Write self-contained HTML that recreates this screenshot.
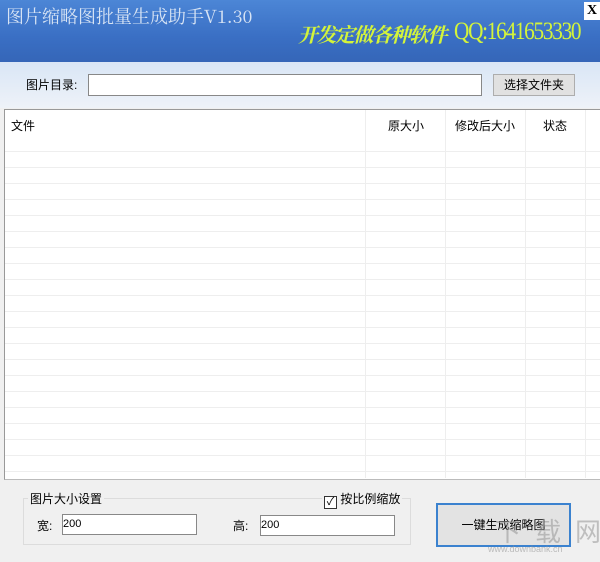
<!DOCTYPE html><html><head><style>
body{margin:0;width:600px;height:562px;overflow:hidden;background:#f0f0f0;font-family:"Liberation Sans","Noto Sans CJK SC",sans-serif;font-size:12px;position:relative}
.a{position:absolute;white-space:nowrap}
.hdr{left:0;top:0;width:600px;height:62px;background:linear-gradient(#4c86d6,#3a6fc4 60%,#3566b8)}
.band{left:0;top:62px;width:600px;height:46px;background:linear-gradient(#d9e6f6,#eef2f8)}
.inp{background:#fff;border:1px solid #888;}
.list{left:4px;top:109px;width:596px;height:369px;background:#fff;border-top:1px solid #999;border-left:1px solid #999;border-bottom:1px solid #bbb;
background-image:repeating-linear-gradient(to bottom,transparent 0 15px,#eee 15px 16px);background-position:0 26px;background-repeat:repeat-y}
.vl{width:1px;background:#eee;top:110px;height:368px}
</style></head><body>
<div class="a hdr"></div>
<div class="a" style="left:6px;top:3px;color:#d8e4f4;font-family:'Noto Serif CJK SC',serif;font-size:18px">图片缩略图批量生成助手V1.30</div>
<div class="a" style="left:298px;top:19px;color:#d4f43a;font-family:'Noto Serif CJK SC',serif;font-size:20px;font-style:italic;font-weight:bold;letter-spacing:-1.5px">开发定做各种软件</div>
<div class="a" style="left:454px;top:18px;color:#d4f43a;font-family:'Liberation Serif',serif;font-size:25px;letter-spacing:-1.5px;transform:scaleX(0.85);transform-origin:left">QQ:1641653330</div>
<div class="a" style="left:584px;top:2px;width:16px;height:18px;background:#fff;font-weight:bold;font-family:'Liberation Serif';font-size:14px;text-align:center;line-height:18px">X</div>
<div class="a band"></div>
<div class="a" style="left:26px;top:76px">图片目录:</div>
<div class="a inp" style="left:88px;top:74px;width:392px;height:20px"></div>
<div class="a" style="left:493px;top:74px;width:82px;height:22px;background:#e1e1e1;border:1px solid #adadad;box-sizing:border-box;text-align:center;line-height:20px">选择文件夹</div>
<div class="a list"></div>
<div class="a" style="left:5px;top:110px;width:595px;height:26px;background:#fff"></div>
<div class="a vl" style="left:365px"></div><div class="a vl" style="left:445px"></div><div class="a vl" style="left:525px"></div><div class="a vl" style="left:585px"></div>
<div class="a" style="left:11px;top:117px">文件</div>
<div class="a" style="left:388px;top:117px">原大小</div>
<div class="a" style="left:455px;top:117px">修改后大小</div>
<div class="a" style="left:543px;top:117px">状态</div>
<div class="a" style="left:23px;top:498px;width:386px;height:45px;border:1px solid #dcdcdc"></div>
<div class="a" style="left:28px;top:490px;background:#f0f0f0;padding:0 2px">图片大小设置</div>
<div class="a" style="left:322px;top:490px;background:#f0f0f0;padding:0 2px"><span style="display:inline-block;width:11px;height:11px;border:1px solid #333;vertical-align:-2px;font-size:11px;line-height:11px;text-align:center;background:#fff">✓</span> 按比例缩放</div>
<div class="a" style="left:37px;top:517px">宽:</div>
<div class="a inp" style="left:62px;top:514px;width:133px;height:19px;font-size:11px;line-height:19px">200</div>
<div class="a" style="left:233px;top:517px">高:</div>
<div class="a inp" style="left:260px;top:515px;width:133px;height:19px;font-size:11px;line-height:19px">200</div>
<div class="a" style="left:436px;top:503px;width:135px;height:44px;background:#e3e3e3;border:2px solid #3b82cf;box-sizing:border-box;text-align:center;line-height:40px">一键生成缩略图</div>
<div class="a" style="left:495px;top:512px;color:rgba(150,150,150,.55);font-size:26px;letter-spacing:14px">下载网</div>
<div class="a" style="left:488px;top:544px;color:rgba(150,150,150,.6);font-size:9px">www.downbank.cn</div>
</body></html>
